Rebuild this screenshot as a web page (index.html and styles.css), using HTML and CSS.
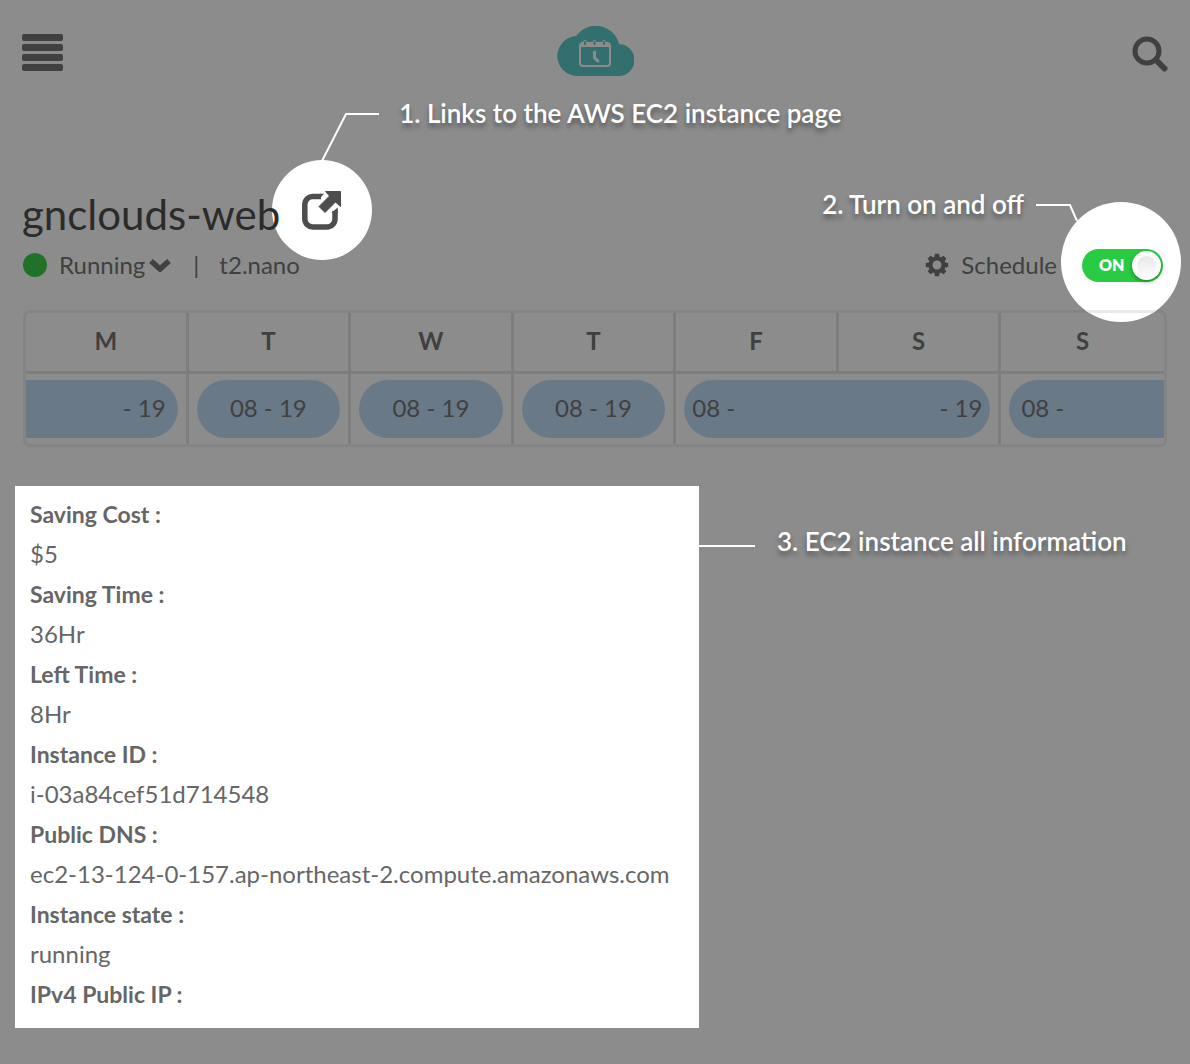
FILE: index.html
```html
<!DOCTYPE html>
<html lang="en">
<head>
<meta charset="utf-8">
<meta name="viewport" content="width=device-width, initial-scale=1">
<title>gnclouds-web</title>
<link rel="stylesheet" href="styles.css">
</head>
<body>
<header class="topbar">
  <button class="icon-button icon-button-menu" type="button" aria-label="Menu">
    <svg width="41" height="37" viewBox="0 0 41 37" fill="currentColor"><rect y="0" width="41" height="7" rx="2"/><rect y="10" width="41" height="7" rx="2"/><rect y="20" width="41" height="7" rx="2"/><rect y="30" width="41" height="7" rx="2"/></svg>
  </button>
  <a class="logo" href="#" aria-label="Home">
    <svg width="78" height="50" viewBox="0 0 78 50">
      <path fill="#326f6e" d="M21 50A20 20 0 0 1 18 10.300Q19 10 20 10.200A24 24 0 0 1 63 18A16 16 0 0 1 62 50Z"/>
      <g fill="none" stroke="#8c8c8c" stroke-width="2" stroke-linecap="round" stroke-linejoin="round"><rect x="24" y="17" width="30" height="23" rx="3"/><path stroke-width="3" d="M38.500 26v6l3.500 3"/></g>
      <path fill="#8c8c8c" d="M25 17h28v4H25z"/>
      <g fill="#326f6e" stroke="#8c8c8c"><rect x="27.500" y="14.500" width="3" height="5" rx="1.500"/><rect x="37" y="14.500" width="3" height="5" rx="1.500"/><rect x="46.500" y="14.500" width="3" height="5" rx="1.500"/></g>
    </svg>
  </a>
  <button class="icon-button icon-button-end" type="button" aria-label="Search">
    <svg width="36" height="37" viewBox="0 0 36 37" fill="none" stroke="currentColor"><circle cx="15" cy="15" r="12" stroke-width="5"/><path d="M24 24l8.500 8.500" stroke-width="6" stroke-linecap="round"/></svg>
  </button>
</header>

<main class="page">
  <section class="instance">
    <div class="title-row">
      <h1 class="title">gnclouds-web</h1>
      <div class="spot-link">
        <a class="external" href="#" aria-label="Open the AWS EC2 instance page">
          <svg width="40" height="39" viewBox="0 0 40 39"><path fill="none" stroke="currentColor" stroke-width="5.500" d="M19 5.500H11A8 8 0 0 0 2.800 13.500V28A8 8 0 0 0 11 36H25A8 8 0 0 0 33 28V20"/><path fill="currentColor" d="M18 2.800h4l-5 5.400zM30.300 22v-1l5.500-4.500V22z"/><path fill="currentColor" stroke="currentColor" stroke-linejoin="round" d="M23.500.5H38.500V15.500L33.500 11 23 21.500 17 15.500 27.500 5z"/></svg>
        </a>
        <div class="callout callout-link">
          <svg width="58" height="48" viewBox="0 0 58 48" fill="none" stroke="#fff" stroke-width="2"><path d="M1 48L25 1H58"/></svg>
          <span>1. Links to the AWS EC2 instance page</span>
        </div>
      </div>
    </div>
    <div class="meta-row">
      <span class="status-dot"></span>
      <button class="text-button state" type="button">Running
        <svg width="22" height="14" viewBox="0 0 22 14" fill="none" stroke="currentColor" stroke-width="5.500"><path d="M2 3l9 8 9-8"/></svg>
      </button>
      <span class="divider">|</span>
      <span class="type">t2.nano</span>
      <button class="text-button schedule" type="button">
        <svg width="24" height="24" viewBox="-12 -12 24 24" fill="currentColor"><circle r="6.500" fill="none" stroke="currentColor" stroke-width="4"/><g id="teeth"><path d="M-2-11.200h4l.8 4h-5.600zM-2 11.200h4l.8-4h-5.600zM-11.200-2v4l4 .8v-5.600zM11.200-2v4l-4 .8v-5.600z"/></g><use href="#teeth" transform="rotate(45)"/></svg>
        Schedule
      </button>
      <div class="spot-power">
        <svg class="spot-disc" width="120" height="120" viewBox="0 0 120 120"><clipPath id="disc"><circle cx="60" cy="60" r="60"/></clipPath><g clip-path="url(#disc)"><path fill="#fff" d="M0 0h120v120H0z"/><path fill="#e9e9e9" d="M0 108h120v3H0z"/></g></svg>
        <label class="switch"><input type="checkbox" role="switch" aria-label="Instance power" checked><span class="switch-text">ON</span><span class="knob"></span></label>
        <div class="callout callout-power">
          <span>2. Turn on and off</span>
          <svg width="42" height="17" viewBox="0 0 42 17" fill="none" stroke="#fff" stroke-width="2"><path d="M0 1H34L41 17"/></svg>
        </div>
      </div>
    </div>
  </section>

  <div class="week">
    <table class="week-table">
      <thead><tr><th>M</th><th>T</th><th>W</th><th>T</th><th>F</th><th>S</th><th>S</th></tr></thead>
      <tbody><tr>
        <td class="from-start"><div class="slot slot-end"><span>- 19</span></div></td>
        <td><div class="slot"><span>08 - 19</span></div></td>
        <td><div class="slot"><span>08 - 19</span></div></td>
        <td><div class="slot"><span>08 - 19</span></div></td>
        <td colspan="2"><div class="slot slot-wide"><span>08 -</span><span>- 19</span></div></td>
        <td class="to-end"><div class="slot slot-start"><span>08 -</span></div></td>
      </tr></tbody>
    </table>
  </div>

  <section class="details">
    <dl class="info">
      <dt>Saving Cost :</dt><dd>$5</dd>
      <dt>Saving Time :</dt><dd>36Hr</dd>
      <dt>Left Time :</dt><dd>8Hr</dd>
      <dt>Instance ID :</dt><dd>i-03a84cef51d714548</dd>
      <dt>Public DNS :</dt><dd>ec2-13-124-0-157.ap-northeast-2.compute.amazonaws.com</dd>
      <dt>Instance state :</dt><dd>running</dd>
      <dt>IPv4 Public IP :</dt>
    </dl>
    <div class="callout callout-info">
      <svg width="56" height="2" viewBox="0 0 56 2"><path fill="#fff" d="M0 0h56v2H0z"/></svg>
      <span>3. EC2 instance all information</span>
    </div>
  </section>
</main>
</body>
</html>
```

FILE: styles.css
```css
* { box-sizing: border-box; }
body {
  margin: 0;
  background: #8c8c8c;
  color: #404040;
  font-family: Lato, "Noto Sans", sans-serif;
  font-size: 24px;
  line-height: 32px;
}
button {
  border: 0;
  padding: 0;
  background: none;
  color: inherit;
  font: inherit;
  cursor: pointer;
}
svg { display: block; flex: none; }

.topbar {
  display: grid;
  grid-template-columns: 1fr auto 1fr;
  align-items: center;
  padding: 26px 22px;
}
.icon-button { justify-self: start; }
.icon-button-menu { padding-top: 3px; }
.icon-button-end { justify-self: end; padding-top: 6px; }

.page { padding: 68px 23px 36px; }

.title-row { display: flex; align-items: center; }
.title {
  position: relative;
  z-index: 1;
  margin: 8px 0 0 -1px;
  color: #2b2b2b;
  font-size: 42px;
  font-weight: 400;
  line-height: 56px;
}
.spot-link {
  position: relative;
  display: flex;
  align-items: center;
  justify-content: center;
  width: 100px;
  height: 100px;
  margin: -10px 0 -11px -8px;
  border-radius: 50%;
  background: #fff;
}
.external { color: #4d4d4d; }

.callout {
  position: absolute;
  display: flex;
  color: #fff;
  font-size: 26px;
  font-weight: 600;
  white-space: nowrap;
  text-shadow: 0 4px 5px rgba(0, 0, 0, .4);
}
.callout-link { left: 49px; top: -47px; gap: 20px; }
.callout-link span, .callout-power span, .callout-info span { margin-top: -16px; }
.callout-power { right: 85px; top: -45px; gap: 12px; }
.callout-info { left: 100%; top: 59px; gap: 22px; }
.callout-info span { margin-top: -20px; }

.meta-row { display: flex; align-items: center; height: 32px; }
.status-dot { width: 24px; height: 24px; border-radius: 50%; background: #20722b; }
.text-button { display: flex; align-items: center; }
.state { gap: 4px; margin-left: 12px; }
.divider { margin-left: 22px; }
.type { margin-left: 20px; }
.schedule { gap: 12px; margin-left: auto; }
.spot-power { position: relative; margin: 0 4px 0 25px; }
.spot-disc { position: absolute; left: -21px; top: -47px; z-index: 1; }
.switch {
  position: relative;
  z-index: 2;
  display: flex;
  align-items: center;
  justify-content: space-between;
  width: 81px;
  height: 33px;
  padding: 0 2px 0 17px;
  border-radius: 17px;
  background: #29cb42;
  color: #fff;
  font-size: 16px;
  font-weight: 800;
  cursor: pointer;
}
.switch input { position: absolute; inset: 0; margin: 0; opacity: 0; }
.knob {
  width: 29px;
  height: 29px;
  border: 5px solid #fcfcfc;
  border-radius: 50%;
  background: linear-gradient(#e8e8e8, #fafafa);
  box-shadow: 0 2px 4px rgba(0, 0, 0, .35);
}

.week {
  margin-top: 29px;
  overflow: hidden;
  border: 3px solid #848484;
  border-radius: 7px;
}
.week-table { width: 100%; table-layout: fixed; border-collapse: separate; border-spacing: 0; }
.week-table th, .week-table td { border-right: 3px solid #7d7d7d; }
.week-table th:last-child, .week-table td:last-child { border-right: 0; }
.week-table th { height: 61px; padding: 0 0 2px; border-bottom: 3px solid #7d7d7d; font-weight: 700; }
.week-table td { padding: 6px 8px; }
.week-table .from-start { padding-left: 0; }
.week-table .to-end { padding-right: 0; }
.slot {
  display: flex;
  align-items: center;
  justify-content: center;
  height: 58px;
  padding: 0 12px 2px;
  border-radius: 29px;
  background: #6a7988;
}
.slot-end { justify-content: flex-end; border-radius: 0 29px 29px 0; }
.slot-start { justify-content: flex-start; border-radius: 29px 0 0 29px; }
.slot-wide { justify-content: space-between; padding: 0 8px 2px; }

.details {
  position: relative;
  width: 684px;
  max-width: 100%;
  margin: 39px 0 0 -8px;
  padding: 8px 0 14px 15px;
  background: #fff;
}
.info { margin: 0; color: #666; line-height: 40px; }
.info dt { font-size: 23px; font-weight: 700; }
.info dd { margin: 0; overflow-wrap: anywhere; }
```
